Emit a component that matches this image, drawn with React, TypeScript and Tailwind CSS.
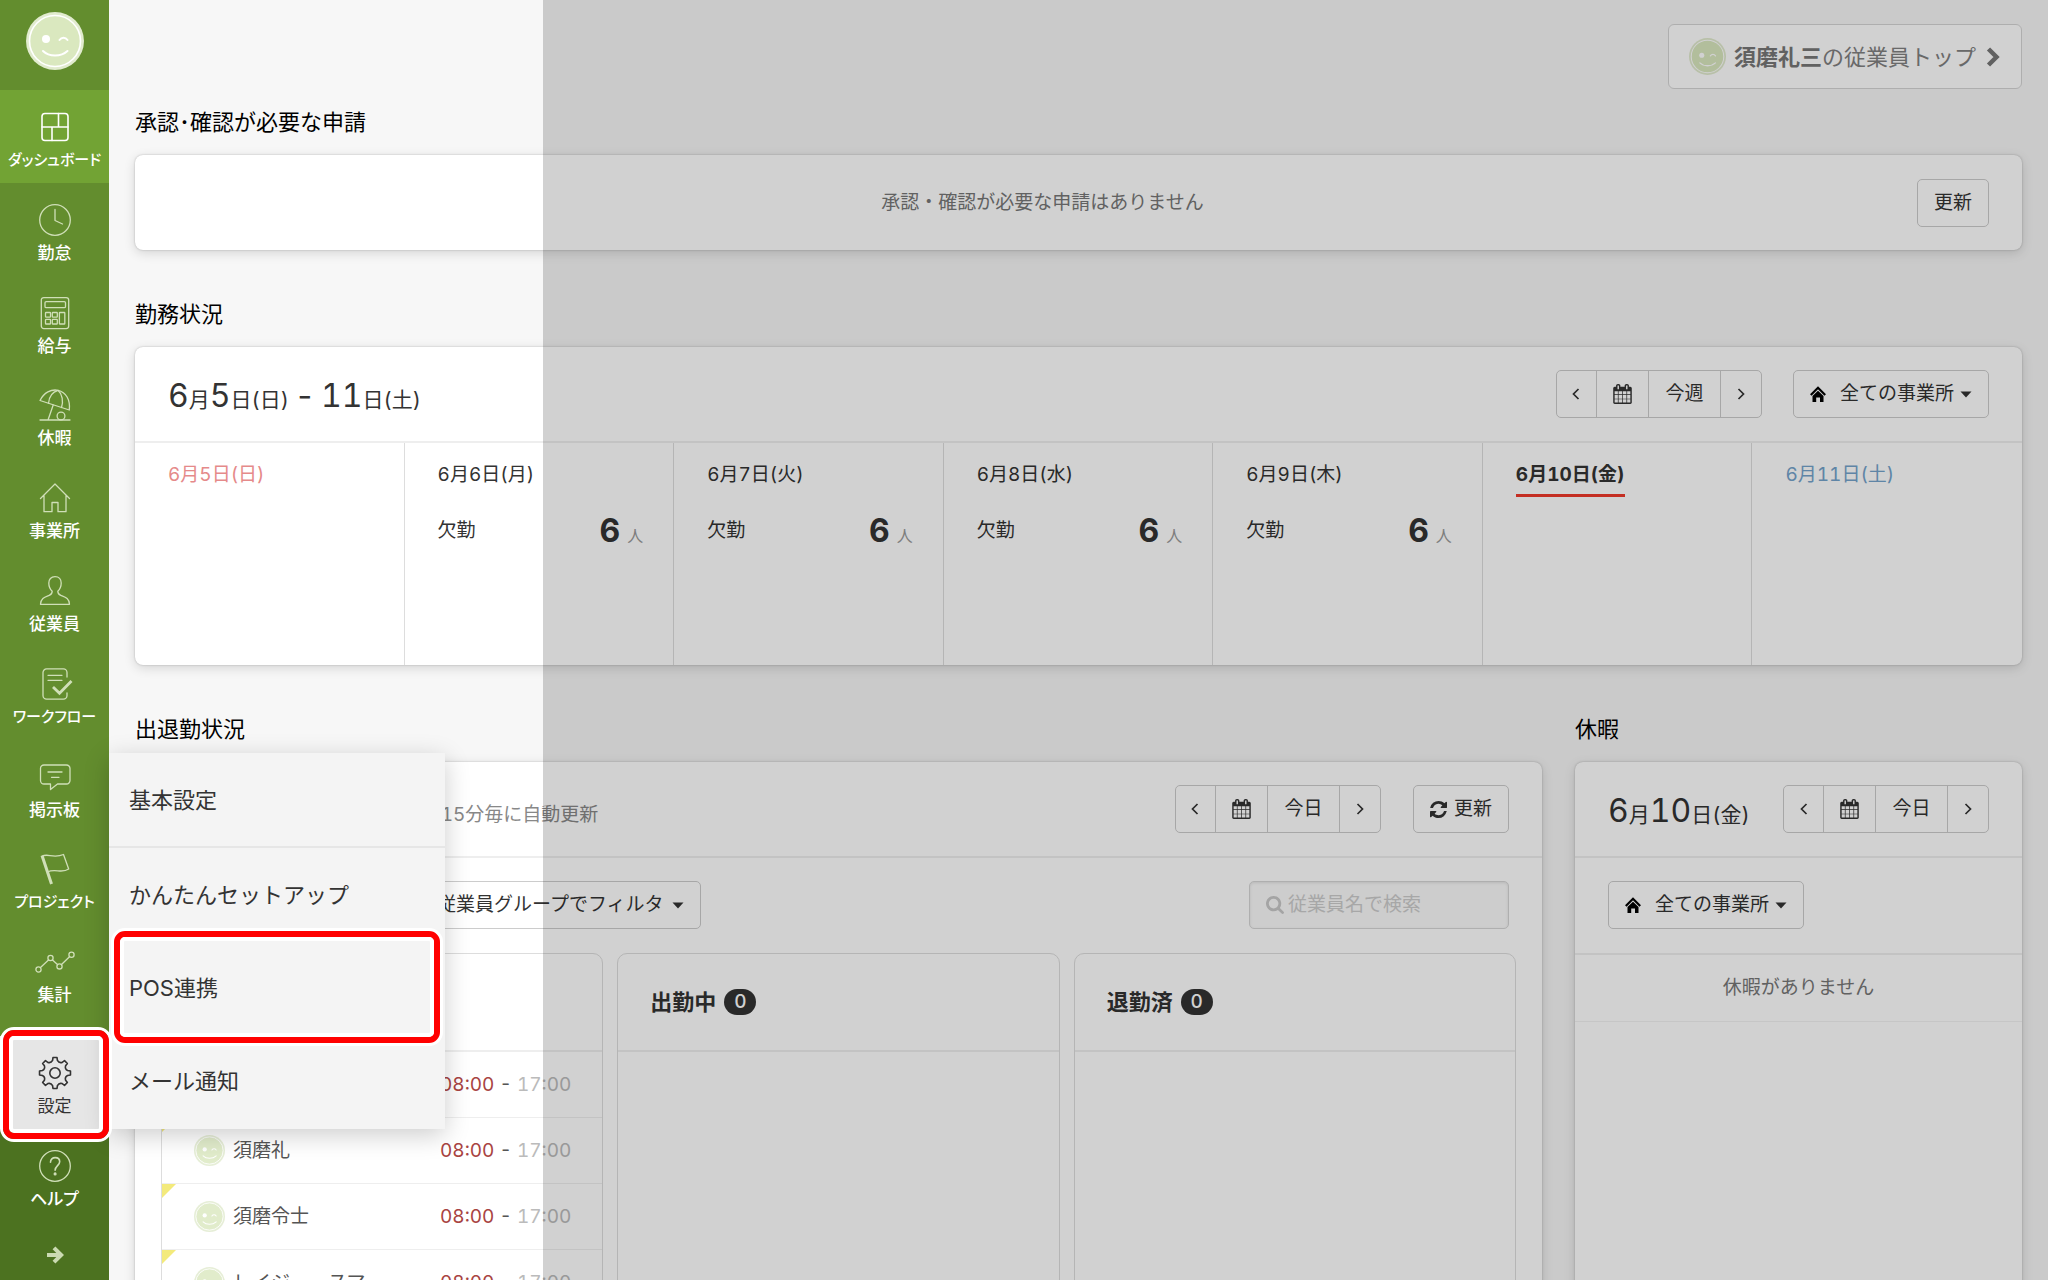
import React from "react";

type IconProps = { className?: string };

const polar = (angle: number, r: number) => `${(16 + r * Math.cos(angle)).toFixed(2)} ${(16 + r * Math.sin(angle)).toFixed(2)}`;

const gearPath =
  Array.from({ length: 8 }, (_, i) => {
    const a = (i * Math.PI) / 4 - Math.PI / 2;
    return [
      i === 0 ? "M" : "L",
      polar(a - 0.13, 15.6),
      "L",
      polar(a + 0.13, 15.6),
      "L",
      polar(a + 0.19, 12.8),
      "Q",
      polar(a + Math.PI / 8, 10.4),
      polar(a + Math.PI / 4 - 0.19, 12.8),
    ].join(" ");
  }).join(" ") + "Z";

function NavSvg({ children }: { children: React.ReactNode }) {
  return (
    <svg
      viewBox="0 0 32 32"
      className="size-8 overflow-visible"
      fill="none"
      stroke="currentColor"
      strokeWidth="1.3"
      strokeLinecap="round"
      strokeLinejoin="round"
      aria-hidden="true"
    >
      {children}
    </svg>
  );
}

const icons = {
  dashboard: (
    <>
      <rect x="3" y="2.5" width="26" height="27" rx="3" strokeWidth="1.6" />
      <path d="M3 16h26M19.5 2.5V16M13 16v13.5" strokeWidth="1.6" />
    </>
  ),
  clock: (
    <>
      <circle cx="16" cy="16" r="15.3" />
      <path d="M16 5.5V16.5L23.5 20" />
    </>
  ),
  calculator: (
    <>
      <rect x="2.3" y="0.6" width="27.4" height="31" rx="2.5" />
      <rect x="6" y="4.6" width="20.5" height="6" rx="1.2" />
      <rect x="6.5" y="15.5" width="5" height="4.6" rx="0.6" />
      <rect x="13.3" y="15.5" width="5" height="4.6" rx="0.6" />
      <rect x="6.5" y="22.4" width="5" height="4.6" rx="0.6" />
      <rect x="13.3" y="22.4" width="5" height="4.6" rx="0.6" />
      <rect x="20.4" y="15.5" width="5.4" height="11.5" rx="0.6" />
    </>
  ),
  umbrella: (
    <>
      <path d="M1 11.5C5 3.500 12 0 19 1.300c8 1.700 12.500 9.700 11.300 19.700L1 11.500Z" />
      <path d="M9.500 14.200C10 8.500 13 3 19 1.300c4.500 4 5.500 11 3.500 17.200" />
      <path d="M14.200 16 9 31M1 31h30" />
      <circle cx="22" cy="27" r="3.900" />
    </>
  ),
  house: <path d="M1.500 16.500 16 2l14.500 14.500M5 13.500V29.700h8V20.500h6v9.200h8V13.500" />,
  person: (
    <path d="M16 1.700c-4 0-6.200 2.600-6.200 6.300 0 3.400 1.200 6.200 3.400 8.200 0 2.400-.8 3.300-3 4.200-4.200 1.700-8.400 2.600-8.700 8.900h29c-.3-6.300-4.500-7.200-8.700-8.900-2.200-.9-3-1.800-3-4.200 2.200-2 3.400-4.800 3.400-8.200 0-3.700-2.200-6.300-6.200-6.300Z" />
  ),
  workflow: (
    <>
      <path d="M28 9V4.500a3.600 3.600 0 0 0-3.600-3.600H7.600A3.600 3.600 0 0 0 4 4.500v23a3.600 3.600 0 0 0 3.600 3.600h16.800a3.600 3.600 0 0 0 3.600-3.600V25" />
      <path d="M9 7.300h14M9 12.300h14" />
      <path d="M14 19l6.500 6.300L32.500 13" strokeWidth="2.800" strokeLinecap="butt" strokeLinejoin="miter" />
    </>
  ),
  board: (
    <>
      <path d="M5 4h22.500a3.500 3.500 0 0 1 3.500 3.500v12a3.500 3.500 0 0 1-3.500 3.500H18.500L11.500 28.500V23H5a3.500 3.500 0 0 1-3.500-3.500v-12A3.500 3.500 0 0 1 5 4Z" />
      <path d="M9 11h14M12.500 16.300h7.500" />
    </>
  ),
  flag: (
    <>
      <path d="M3 2.500 12.500 31" strokeWidth="3" strokeLinecap="butt" />
      <path d="M3 3.500c5-4 11 2.500 21.500-2l5.200 14.500c-7 5-13.500-1-21.200 3" />
    </>
  ),
  chart: (
    <>
      <path d="M1.500 21.500 9.500 14M13.500 14l5 4.500M22.500 18.500l8-7.700" />
      <circle cx="-0.500" cy="23.500" r="2.600" />
      <circle cx="11.500" cy="12" r="2.600" />
      <circle cx="20.500" cy="20.400" r="2.600" />
      <circle cx="32.500" cy="8.800" r="2.600" />
    </>
  ),
  gear: (
    <>
      <path d={gearPath} strokeWidth="1.600" />
      <circle cx="16" cy="16" r="5.200" strokeWidth="1.600" />
    </>
  ),
  help: (
    <>
      <circle cx="16" cy="16" r="15.300" />
      <path d="M11.500 12.200c0-2.800 2-4.600 4.700-4.600 2.600 0 4.500 1.700 4.500 4.200 0 3.500-4.600 4.200-4.600 8.400" strokeWidth="1.600" />
      <circle cx="16.100" cy="23.900" r="0.900" fill="currentColor" />
    </>
  ),
};

type IconName = keyof typeof icons;

function Avatar({ className }: IconProps) {
  return (
    <svg viewBox="0 0 58 58" className={className} fill="none" aria-hidden="true">
      <circle cx="29" cy="29" r="29" fill="#e1ebce" />
      <circle cx="29" cy="29" r="25.500" fill="#dae8bf" stroke="#fff" strokeWidth="1.600" />
      <circle cx="20" cy="27" r="4" fill="#fff" />
      <path d="M33.500 28c2-3 6-3 8 0" stroke="#fff" strokeWidth="2" strokeLinecap="round" />
      <path d="M17 39c6 6 18 6 24.500 0" stroke="#fff" strokeWidth="2" strokeLinecap="round" />
    </svg>
  );
}

function CalendarIcon() {
  return (
    <svg viewBox="64 0 1664 1792" className="h-5 w-[19px]" fill="currentColor" aria-hidden="true">
      <path d="M192 1664h288v-288h-288v288zm352 0h320v-288h-320v288zm-352-352h288v-320h-288v320zm352 0h320v-320h-320v320zm-352-384h288v-288h-288v288zm736 736h320v-288h-320v288zm-384-736h320v-288h-320v288zm768 736h288v-288h-288v288zm-384-352h320v-320h-320v320zm-352-864v-288q0-13-9.500-22.500t-22.500-9.500h-64q-13 0-22.500 9.500t-9.500 22.500v288q0 13 9.500 22.500t22.500 9.500h64q13 0 22.500-9.500t9.500-22.500zm736 864h288v-320h-288v320zm-384-384h320v-288h-320v288zm384 0h288v-288h-288v288zm32-480v-288q0-13-9.500-22.500t-22.500-9.500h-64q-13 0-22.500 9.500t-9.500 22.500v288q0 13 9.500 22.500t22.500 9.500h64q13 0 22.500-9.500t9.500-22.500zm384-64v1280q0 52-38 90t-90 38h-1408q-52 0-90-38t-38-90v-1280q0-52 38-90t90-38h128v-96q0-66 47-113t113-47h64q66 0 113 47t47 113v96h384v-96q0-66 47-113t113-47h64q66 0 113 47t47 113v96h128q52 0 90 38t38 90z" />
    </svg>
  );
}

function RefreshIcon() {
  return (
    <svg viewBox="0 0 1536 1536" className="size-[17px]" fill="currentColor" aria-hidden="true">
      <path d="M1511 928q0 5-1 7-64 268-268 434.500T764 1536q-146 0-282.500-55T238 1324l-129 129q-19 19-45 19t-45-19-19-45V960q0-26 19-45t45-19h448q26 0 45 19t19 45-19 45l-137 137q71 66 161 102t187 36q134 0 250-65t186-179q11-17 53-117 8-23 30-23h192q13 0 22.500 9.500t9.500 22.500zm25-800v448q0 26-19 45t-45 19h-448q-26 0-45-19t-19-45 19-45l138-138Q969 256 768 256q-134 0-250 65T332 500q-11 17-53 117-8 23-30 23H50q-13 0-22.500-9.500T18 608v-7q65-268 270-434.500T768 0q146 0 284 55.500T1297 212l130-129q19-19 45-19t45 19 19 45z" />
    </svg>
  );
}

function SearchIcon() {
  return (
    <svg viewBox="64 128 1664 1664" className="size-[18px] shrink-0" fill="currentColor" aria-hidden="true">
      <path d="M1216 832q0-185-131.500-316.500t-316.500-131.500-316.500 131.500-131.500 316.500 131.500 316.500 316.500 131.500 316.500-131.500 131.500-316.500zm512 832q0 52-38 90t-90 38q-54 0-90-38l-343-342q-179 124-399 124-143 0-273.500-55.500t-225-150-150-225-55.500-273.500 55.500-273.500 150-225 225-150 273.500-55.500 273.500 55.500 225 150 150 225 55.500 273.500q0 220-124 399l343 343q37 37 37 90z" />
    </svg>
  );
}

function HomeIcon() {
  return (
    <svg viewBox="0 0 16 16" className="size-4 text-black" aria-hidden="true">
      <path d="M.8 9 8 1.800 15.200 9" fill="none" stroke="currentColor" strokeWidth="2.200" />
      <path d="M2.500 10 8 4.800 13.500 10V16H10v-4.500H6.200V16H2.500Z" fill="currentColor" />
    </svg>
  );
}

function Chevron({ dir }: { dir: "left" | "right" }) {
  return (
    <svg viewBox="0 0 8 12" className="h-3 w-2" fill="none" stroke="currentColor" strokeWidth="1.700" aria-hidden="true">
      <path d={dir === "left" ? "M6.500 1 1.500 6l5 5" : "M1.500 1l5 5-5 5"} />
    </svg>
  );
}

function Caret() {
  return (
    <svg viewBox="0 0 12 7" className="h-[7px] w-3" fill="currentColor" aria-hidden="true">
      <path d="M.5.500h11L6 6.500Z" />
    </svg>
  );
}

type NavEntry = { icon: IconName; label: string; active?: boolean; selected?: boolean; compact?: boolean };

function NavItem({ icon, label, active, selected, compact, className }: NavEntry & { className: string }) {
  const tone = selected
    ? "bg-[#e6e6e6] text-[#333]"
    : active
      ? "bg-[#72a334] text-white"
      : "text-[#d0dfb8]";
  return (
    <a href="#" className={`flex flex-col items-center pt-[21px] ${tone} ${className}`}>
      <NavSvg>{icons[icon]}</NavSvg>
      <span
        className={`mt-[7px] leading-5 whitespace-nowrap [font-feature-settings:'palt'] ${compact ? "text-[15px]" : "text-[17px]"} ${selected ? "font-normal text-[#333]" : "font-medium text-white"}`}
      >
        {label}
      </span>
    </a>
  );
}

const mainNav: NavEntry[] = [
  { icon: "dashboard", label: "ダッシュボード", active: true, compact: true },
  { icon: "clock", label: "勤怠" },
  { icon: "calculator", label: "給与" },
  { icon: "umbrella", label: "休暇" },
  { icon: "house", label: "事業所" },
  { icon: "person", label: "従業員" },
  { icon: "workflow", label: "ワークフロー", compact: true },
  { icon: "board", label: "掲示板" },
  { icon: "flag", label: "プロジェクト", compact: true },
  { icon: "chart", label: "集計" },
];

function Sidebar() {
  return (
    <aside className="flex w-[109px] shrink-0 flex-col bg-[#638d2e]">
      <div className="flex h-[90px] justify-center pt-3">
        <Avatar className="size-[58px]" />
      </div>
      <nav className="flex flex-1 flex-col pb-[18px]">
        {mainNav.map((n) => (
          <NavItem key={n.label} {...n} className="flex-1" />
        ))}
      </nav>
      <div className="bg-[#4c7220]">
        <NavItem icon="gear" label="設定" selected className="h-[93px]" />
        <NavItem icon="help" label="ヘルプ" className="h-[93px]" />
        <button type="button" aria-label="メニューを開く" className="flex h-[58px] w-full items-center justify-center pt-2 text-[#cbdab2]">
          <svg viewBox="0 0 18 18" className="size-[18px]" fill="none" stroke="currentColor" strokeWidth="4" aria-hidden="true">
            <path d="M1 9h14M8 1.800 15.200 9 8 16.200" />
          </svg>
        </button>
      </div>
    </aside>
  );
}

function SettingsMenu() {
  const item = "flex h-[93px] items-center px-5";
  return (
    <ul className="absolute top-[753px] left-[109px] w-[336px] bg-[#f4f4f4] pb-0.5 text-[22px] text-[#333] shadow-[0_6px_24px_rgba(0,0,0,0.2)]">
      <li className="border-b-2 border-[#e6e6e6]">
        <a href="#" className={item}>基本設定</a>
      </li>
      <li><a href="#" className={item}>かんたんセットアップ</a></li>
      <li><a href="#" className={item}>POS連携</a></li>
      <li><a href="#" className={item}>メール通知</a></li>
    </ul>
  );
}

function HighlightFrame({ className }: { className: string }) {
  return (
    <div className={`pointer-events-none absolute rounded-[14px] border-[3px] border-white ${className}`}>
      <div className="h-full rounded-[11px] border-[6px] border-[#f00]">
        <div className="h-full rounded-[5px] border-4 border-white" />
      </div>
    </div>
  );
}

function DateStepper({ label }: { label: string }) {
  return (
    <div className="flex h-12 shrink-0 divide-x divide-[#ccc] rounded-[5px] border border-[#ccc] bg-white text-[#333]">
      <button type="button" aria-label="前へ" className="flex w-10 items-center justify-center"><Chevron dir="left" /></button>
      <button type="button" aria-label="カレンダー" className="flex w-[52px] items-center justify-center"><CalendarIcon /></button>
      <button type="button" className="w-[72px]">{label}</button>
      <button type="button" aria-label="次へ" className="flex w-10 items-center justify-center"><Chevron dir="right" /></button>
    </div>
  );
}

const buttonBox = "flex h-12 shrink-0 items-center rounded-[5px] border border-[#ccc] bg-white px-4 text-[#333]";

function OfficeButton() {
  return (
    <button type="button" className={buttonBox}>
      <HomeIcon />
      <span className="mr-1.5 ml-[14px]">全ての事業所</span>
      <Caret />
    </button>
  );
}

function BigDate({ parts }: { parts: [string, string][] }) {
  return (
    <h3 className="pt-1 text-[21px] whitespace-pre text-[#333]">
      {parts.map(([big, small]) => (
        <React.Fragment key={big}>
          <span className="text-[32px] leading-9">{big}</span>
          {small}
        </React.Fragment>
      ))}
    </h3>
  );
}

const card = "rounded-lg bg-white shadow-[0_0_2px_rgba(0,0,0,0.25),0_3px_12px_rgba(0,0,0,0.14)]";
const heading = "mb-[17px] text-[22px] leading-8 text-black";

const week: { date: string; tone: string; absent?: number; today?: boolean }[] = [
  { date: "6月5日(日)", tone: "text-[#e58a8a]" },
  { date: "6月6日(月)", tone: "text-[#333]", absent: 6 },
  { date: "6月7日(火)", tone: "text-[#333]", absent: 6 },
  { date: "6月8日(水)", tone: "text-[#333]", absent: 6 },
  { date: "6月9日(木)", tone: "text-[#333]", absent: 6 },
  { date: "6月10日(金)", tone: "text-[#333]", today: true },
  { date: "6月11日(土)", tone: "text-[#74a3cb]" },
];

const staff = ["須磨礼三", "須磨礼", "須磨令士", "レイジー　スマ"];

function BoardColumn({ title, count, children }: { title: string; count: number; children?: React.ReactNode }) {
  return (
    <section className="min-h-[520px] flex-1 rounded-[10px] border border-[#ddd]">
      <h4 className="flex h-[98px] items-center gap-2 border-b-2 border-[#eee] pl-8 text-[22px] font-bold text-[#333]">
        {title}
        <span className="flex h-[26px] w-8 items-center justify-center rounded-full bg-[#333] text-[19px] font-medium text-white">{count}</span>
      </h4>
      {children}
    </section>
  );
}

export default function App() {
  return (
    <div className="relative flex h-screen overflow-hidden bg-[#f7f7f7] font-['Inter','Noto_Sans_CJK_JP',sans-serif] text-[19px] leading-7 tabular-nums">
      <Sidebar />
      <main className="flex min-w-0 flex-1 flex-col pr-[26px] pl-[26px]">
        <header className="flex h-[106px] shrink-0 items-start justify-end pt-6">
          <a href="#" className="flex h-[65px] items-center rounded-md border border-[#d5d5d5] bg-white pr-[21px] pl-5 text-[22px] text-[#808080]">
            <Avatar className="mr-2 size-[37px]" />
            <strong className="font-bold text-[#777]">須磨礼三</strong>の従業員トップ
            <svg viewBox="0 0 14 20" className="ml-2.5 h-5 w-3.5 text-[#777]" fill="none" stroke="currentColor" strokeWidth="4.500" aria-hidden="true">
              <path d="M2.500 2 10.500 10l-8 8" />
            </svg>
          </a>
        </header>

        <section>
          <h2 className={heading}>承認･確認が必要な申請</h2>
          <div className={`${card} flex h-[95px] items-center px-[33px]`}>
            <p className="flex-1 text-center text-[#777]">承認・確認が必要な申請はありません</p>
            <button type="button" className={buttonBox}>更新</button>
          </div>
        </section>

        <section className="mt-12">
          <h2 className={heading}>勤務状況</h2>
          <div className={card}>
            <div className="flex h-24 items-center justify-between border-b-2 border-[#eee] px-[33px]">
              <BigDate parts={[["6", "月"], ["5", "日(日) "], ["-", " "], ["11", "日(土)"]]} />
              <div className="flex gap-[31px]">
                <DateStepper label="今週" />
                <OfficeButton />
              </div>
            </div>
            <div className="grid h-[222px] grid-cols-7 divide-x divide-[#ddd]">
              {week.map((d) => (
                <div key={d.date} className={`pt-[18px] pr-[30px] pl-[33px] ${d.tone}`}>
                  <div className={d.today ? "inline-block border-b-[3px] border-[#f0392a] pb-[5px] font-bold" : ""}>{d.date}</div>
                  {d.absent && (
                    <div className="mt-6 flex h-9 items-center justify-between">
                      <span>欠勤</span>
                      <span className="flex items-baseline gap-[7px]">
                        <b className="text-[32px] leading-9">{d.absent}</b>
                        <small className="text-base text-[#999]">人</small>
                      </span>
                    </div>
                  )}
                </div>
              ))}
            </div>
          </div>
        </section>

        <div className="mt-12 grid grid-cols-[1fr_447px] gap-[33px]">
          <section>
            <h2 className={heading}>出退勤状況</h2>
            <div className={card}>
              <div className="flex h-24 items-center border-b-2 border-[#eee] px-[33px]">
                <BigDate parts={[["6", "月"], ["10", "日(金)"]]} />
                <p className="ml-[131px] flex-1 pt-3 text-[#888]">15分毎に自動更新</p>
                <div className="flex gap-8">
                  <DateStepper label="今日" />
                  <button type="button" className={`${buttonBox} gap-[7px]`}>
                    <RefreshIcon />
                    更新
                  </button>
                </div>
              </div>
              <div className="flex items-center px-[33px] pt-[23px] pb-6">
                <OfficeButton />
                <button type="button" className={`${buttonBox} ml-14`}>
                  <span className="mr-2">従業員グループでフィルタ</span>
                  <Caret />
                </button>
                <label className="ml-auto flex h-12 w-[260px] items-center gap-1 rounded-[5px] border border-[#d6d6d6] bg-[#fafafa] px-4 text-[#c8c8c8] shadow-[inset_0_1px_3px_rgba(0,0,0,0.1)]">
                  <SearchIcon />
                  <input type="text" aria-label="従業員名で検索" placeholder="従業員名で検索" className="w-full min-w-0 bg-transparent placeholder:text-[#ccc] focus:outline-none" />
                </label>
              </div>
              <div className="flex gap-[14px] px-[26px]">
                <BoardColumn title="出勤前" count={6}>
                  <ul>
                    {staff.map((name) => (
                      <li key={name} className="flex h-[66px] items-center border-b border-[#eee] pr-[31px]">
                        <span className="size-0 self-start border-t-[14px] border-r-[14px] border-t-[#f3ea7c] border-r-transparent" />
                        <Avatar className="mr-2 ml-[18px] size-[31px] opacity-80" />
                        <span className="text-[#555]">{name}</span>
                        <span className="ml-auto text-[#bbb]">
                          <span className="text-[#a94442]">08:00</span> <span className="text-[#555]">-</span> 17:00
                        </span>
                      </li>
                    ))}
                  </ul>
                </BoardColumn>
                <BoardColumn title="出勤中" count={0} />
                <BoardColumn title="退勤済" count={0} />
              </div>
            </div>
          </section>

          <section className="flex flex-col">
            <h2 className={heading}>休暇</h2>
            <div className={`${card} flex-1`}>
              <div className="flex h-24 items-center justify-between border-b-2 border-[#eee] px-[33px]">
                <BigDate parts={[["6", "月"], ["10", "日(金)"]]} />
                <DateStepper label="今日" />
              </div>
              <div className="flex border-b-2 border-[#eee] px-[33px] pt-[23px] pb-6">
                <OfficeButton />
              </div>
              <p className="border-b border-[#f2f2f2] py-[19px] text-center text-[#777]">休暇がありません</p>
            </div>
          </section>
        </div>
      </main>

      <div className="pointer-events-none absolute inset-y-0 right-0 left-[543px] bg-black/18" />
      <SettingsMenu />
      <HighlightFrame className="top-[1027px] left-0 h-[115px] w-[112px]" />
      <HighlightFrame className="top-[928px] left-[111px] h-[118px] w-[332px]" />
    </div>
  );
}
